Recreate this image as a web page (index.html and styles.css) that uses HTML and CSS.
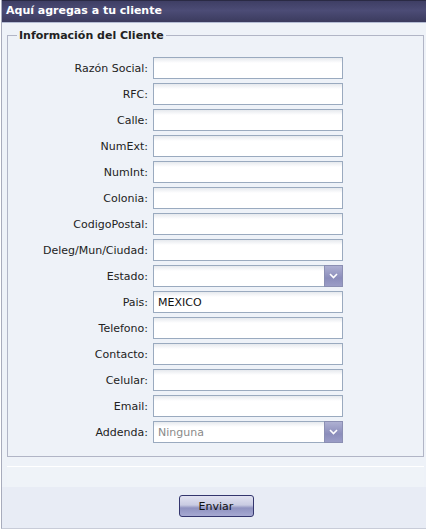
FILE: index.html
```html
<!DOCTYPE html>
<html lang="es">
<head>
<meta charset="utf-8">
<title>Aquí agregas a tu cliente</title>
<link rel="stylesheet" href="styles.css">
</head>
<body>
<div class="window">
  <div class="header">Aquí agregas a tu cliente</div>
  <div class="body">
    <fieldset class="group">
      <legend>Información del Cliente</legend>
      <div class="form">
        <label>Razón Social:</label><div class="field"></div>
        <label>RFC:</label><div class="field"></div>
        <label>Calle:</label><div class="field"></div>
        <label>NumExt:</label><div class="field"></div>
        <label>NumInt:</label><div class="field"></div>
        <label>Colonia:</label><div class="field"></div>
        <label>CodigoPostal:</label><div class="field"></div>
        <label>Deleg/Mun/Ciudad:</label><div class="field"></div>
        <label>Estado:</label><div class="field combo"><span class="value"></span><span class="trigger"><svg width="9" height="6" viewBox="0 0 9 6"><path d="M1 1 L4.5 4.5 L8 1" fill="none" stroke="#fff" stroke-width="1.6"/></svg></span></div>
        <label>Pais:</label><div class="field"><span class="value">MEXICO</span></div>
        <label>Telefono:</label><div class="field"></div>
        <label>Contacto:</label><div class="field"></div>
        <label>Celular:</label><div class="field"></div>
        <label>Email:</label><div class="field"></div>
        <label>Addenda:</label><div class="field combo"><span class="value muted">Ninguna</span><span class="trigger"><svg width="9" height="6" viewBox="0 0 9 6"><path d="M1 1 L4.5 4.5 L8 1" fill="none" stroke="#fff" stroke-width="1.6"/></svg></span></div>
      </div>
    </fieldset>
    <div class="strip"></div>
  </div>
  <div class="footer">
    <button class="btn" type="button">Enviar</button>
  </div>
</div>
</body>
</html>
```
FILE: styles.css
```css
html, body {
  margin: 0;
  padding: 0;
  background: #ffffff;
}
body {
  font-family: "DejaVu Sans", Tahoma, sans-serif;
  font-size: 11px;
  color: #222;
}
.window {
  margin-left: 1px;
  width: 424px;
  height: 528px;
  border-left: 1px solid #a8acbc;
  border-bottom: 1px solid #c8ccd8;
  background: #e8ecf5;
  display: flex;
  flex-direction: column;
}
.header {
  box-sizing: border-box;
  border-top: 1px solid #2a2a44;
  border-bottom: 1px solid #b4bcd4;
  height: 23px;
  background: linear-gradient(#3e3e64, #4c4c76 45%, #3b3b5e);
  color: #fff;
  font-weight: bold;
  font-size: 11px;
  line-height: 20px;
  padding-left: 4px;
}
.body {
  background: #eef2f8;
  padding: 6px 2px 0 5px;
}
.group {
  margin: 0;
  border: 1px solid #b1b5c6;
  padding: 15px 0 13px 0;
}
.group legend {
  font-weight: bold;
  font-size: 11px;
  padding: 0 2px;
  margin-left: 9px;
  color: #222;
}
.form {
  display: grid;
  grid-template-columns: 140px 190px;
  column-gap: 5px;
  row-gap: 4px;
  align-items: center;
}
.form label {
  text-align: right;
  font-size: 11px;
}
.field {
  height: 22px;
  box-sizing: border-box;
  border: 1px solid #9aaabf;
  background: linear-gradient(#e6e9ee, #ffffff 5px);
  display: flex;
  align-items: center;
}
.value {
  flex: 1;
  padding-left: 4px;
  font-size: 11px;
  color: #111;
}
.value.muted {
  color: #8a8a8a;
}
.trigger {
  width: 17px;
  align-self: stretch;
  margin: -1px -1px -1px 0;
  border: 1px solid #8b8fb3;
  background: linear-gradient(#aeb0d2, #8b8dbb 60%, #9a9cc6);
  display: flex;
  align-items: center;
  justify-content: center;
}
.strip {
  margin-top: 9px;
  height: 20px;
  border-top: 1px solid #ffffff;
  background: #eff3f8;
}
.footer {
  flex: 1;
  display: flex;
  justify-content: center;
  padding-top: 8px;
  padding-left: 4px;
}
.btn {
  width: 75px;
  height: 22px;
  border: 1px solid #34366e;
  border-radius: 3px;
  background: linear-gradient(#e2e3f1, #c9cbe2 45%, #8f92c0 60%, #a6a9d2);
  font-family: "DejaVu Sans", Tahoma, sans-serif;
  font-size: 11px;
  color: #111;
  padding: 0;
}
```
